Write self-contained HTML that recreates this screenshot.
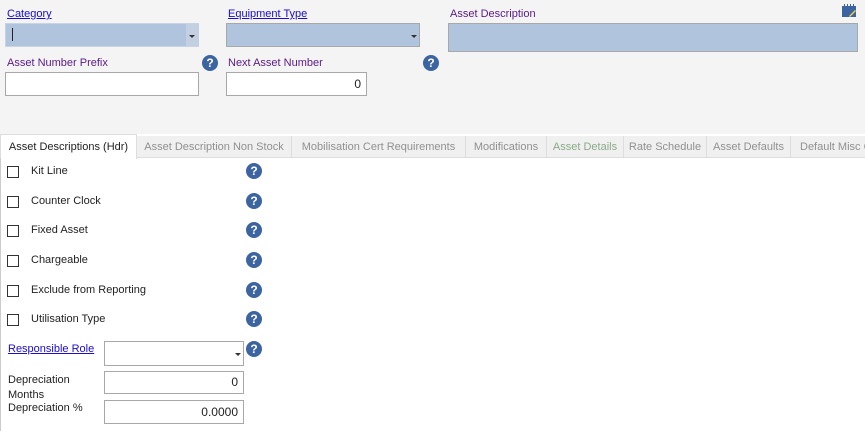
<!DOCTYPE html>
<html><head><style>
*{margin:0;padding:0;box-sizing:border-box}
body{width:865px;height:431px;overflow:hidden;background:#fff;font-family:"Liberation Sans",sans-serif;font-size:11px;color:#222;position:relative}
.a{position:absolute}
.top{left:0;top:0;width:865px;height:134px;background:#f4f4f4}
.lnk{color:#1a0dcc;text-decoration:underline}
.pur{color:#5a1a8a}
.sel{background:#b0c4de;border:1px solid #a8a8a8}
.inp{background:#fff;border:1px solid #a8a8a8;text-align:right;padding-right:5px;font-size:12px;line-height:20px}
.arr{position:absolute;width:0;height:0;border-left:3px solid transparent;border-right:3px solid transparent;border-top:3px solid #333}
.q{width:16px;height:16px;border-radius:50%;background:#3b64a0;color:#fff;font-weight:bold;font-size:12px;text-align:center;line-height:16px}
.tabs{left:0;top:136px;width:865px;height:22px;background:#f0f0f0;border-bottom:1px solid #ddd}
.tab{position:absolute;top:0;height:22px;line-height:22px;color:#909090;border-right:1px solid #ddd;text-align:center;font-size:11px;white-space:nowrap;overflow:hidden}
.cb{width:12px;height:12px;border:1px solid #333;background:#fff}
</style></head><body>
<div class="a top"></div>
<div class="a lnk" style="left:7px;top:8px">Category</div>
<div class="a sel" style="left:5px;top:23px;width:194px;height:24px;border-color:#c8d4e4"><div class="a" style="left:6px;top:4px;width:1px;height:13px;background:#222"></div><div class="a" style="left:180px;top:0;width:13px;height:22px;background:#c2d0e2"></div><div class="arr" style="left:183px;top:11px"></div></div>
<div class="a lnk" style="left:228px;top:8px">Equipment Type</div>
<div class="a sel" style="left:226px;top:23px;width:194px;height:24px"><div class="arr" style="left:184px;top:11px"></div></div>
<div class="a pur" style="left:450px;top:8px">Asset Description</div>
<div class="a sel" style="left:448px;top:23px;width:410px;height:29px"></div>
<svg class="a" style="left:842px;top:4px" width="15" height="13"><rect x="0" y="2" width="14" height="11" fill="#3b64a0"/><rect x="2" y="0" width="1" height="3" fill="#3b64a0"/><rect x="5" y="0" width="1" height="3" fill="#3b64a0"/><rect x="8" y="0" width="1" height="3" fill="#3b64a0"/><rect x="11" y="0" width="1" height="3" fill="#3b64a0"/><path d="M7 12 L13 6 L14 7 L8 13Z" fill="#f0d040"/></svg>
<div class="a pur" style="left:7px;top:57px">Asset Number Prefix</div>
<div class="a q" style="left:202px;top:55px">?</div>
<div class="a inp" style="left:5px;top:72px;width:194px;height:24px"></div>
<div class="a pur" style="left:228px;top:57px">Next Asset Number</div>
<div class="a q" style="left:423px;top:55px">?</div>
<div class="a inp" style="left:226px;top:72px;width:141px;height:24px;line-height:22px">0</div>
<div class="a tabs"></div>
<div class="a tab" style="left:0;top:134px;height:25px;line-height:24px;width:137px;background:#fff;color:#222;border:1px solid #ddd;border-bottom:none">Asset Descriptions (Hdr)</div>
<div class="a tab" style="left:137px;top:136px;width:155px">Asset Description Non Stock</div>
<div class="a tab" style="left:292px;top:136px;width:174px">Mobilisation Cert Requirements</div>
<div class="a tab" style="left:466px;top:136px;width:81px">Modifications</div>
<div class="a tab" style="left:547px;top:136px;width:77px;color:#8aaa8a">Asset Details</div>
<div class="a tab" style="left:624px;top:136px;width:83px">Rate Schedule</div>
<div class="a tab" style="left:707px;top:136px;width:84px">Asset Defaults</div>
<div class="a tab" style="left:791px;top:136px;width:80px;text-align:left;padding-left:9px">Default Misc Charges</div>
<div class="a" style="left:0;top:158px;width:1px;height:273px;background:#ccc"></div>

<div class="a cb" style="left:7px;top:166px"></div><div class="a" style="left:31px;top:165px">Kit Line</div><div class="a q" style="left:246px;top:163px">?</div>
<div class="a cb" style="left:7px;top:196px"></div><div class="a" style="left:31px;top:195px">Counter Clock</div><div class="a q" style="left:246px;top:193px">?</div>
<div class="a cb" style="left:7px;top:225px"></div><div class="a" style="left:31px;top:224px">Fixed Asset</div><div class="a q" style="left:246px;top:222px">?</div>
<div class="a cb" style="left:7px;top:255px"></div><div class="a" style="left:31px;top:254px">Chargeable</div><div class="a q" style="left:246px;top:252px">?</div>
<div class="a cb" style="left:7px;top:285px"></div><div class="a" style="left:31px;top:284px">Exclude from Reporting</div><div class="a q" style="left:246px;top:282px">?</div>
<div class="a cb" style="left:7px;top:314px"></div><div class="a" style="left:31px;top:313px">Utilisation Type</div><div class="a q" style="left:246px;top:311px">?</div>

<div class="a lnk" style="left:8px;top:343px">Responsible Role</div>
<div class="a inp" style="left:104px;top:341px;width:140px;height:25px"><div class="arr" style="left:130px;top:11px"></div></div>
<div class="a q" style="left:246px;top:341px">?</div>
<div class="a" style="left:8px;top:373px;line-height:15px">Depreciation<br>Months</div>
<div class="a inp" style="left:104px;top:371px;width:140px;height:23px;line-height:21px">0</div>
<div class="a" style="left:8px;top:402px">Depreciation %</div>
<div class="a inp" style="left:104px;top:400px;width:140px;height:24px;line-height:22px">0.0000</div>
</body></html>
